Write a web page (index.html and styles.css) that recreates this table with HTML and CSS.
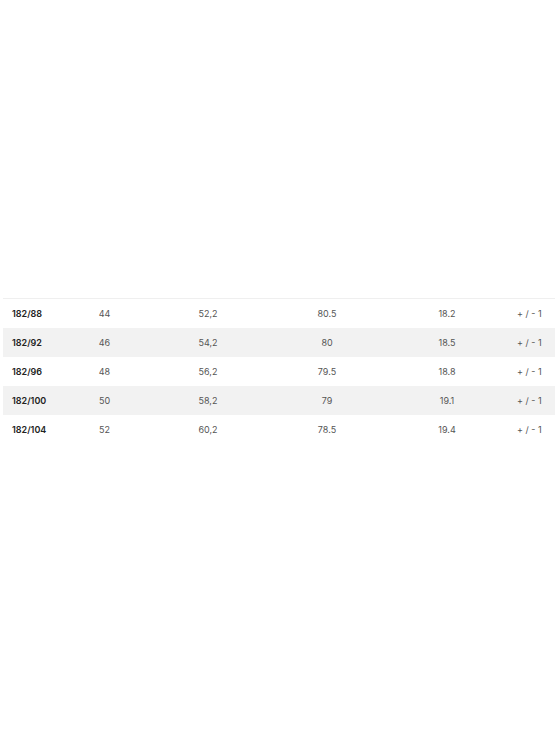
FILE: index.html
```html
<!DOCTYPE html>
<html>
<head>
<meta charset="utf-8">
<link rel="stylesheet" href="styles.css">
</head>
<body>
<div class="page">
  <div class="table">
    <div class="row">
      <div class="cell size">182/88</div><div class="cell">44</div><div class="cell">52,2</div><div class="cell">80.5</div><div class="cell">18.2</div><div class="cell tol">+ / - 1</div>
    </div>
    <div class="row alt">
      <div class="cell size">182/92</div><div class="cell">46</div><div class="cell">54,2</div><div class="cell">80</div><div class="cell">18.5</div><div class="cell tol">+ / - 1</div>
    </div>
    <div class="row">
      <div class="cell size">182/96</div><div class="cell">48</div><div class="cell">56,2</div><div class="cell">79.5</div><div class="cell">18.8</div><div class="cell tol">+ / - 1</div>
    </div>
    <div class="row alt">
      <div class="cell size">182/100</div><div class="cell">50</div><div class="cell">58,2</div><div class="cell">79</div><div class="cell">19.1</div><div class="cell tol">+ / - 1</div>
    </div>
    <div class="row">
      <div class="cell size">182/104</div><div class="cell">52</div><div class="cell">60,2</div><div class="cell">78.5</div><div class="cell">19.4</div><div class="cell tol">+ / - 1</div>
    </div>
  </div>
</div>
</body>
</html>
```

FILE: styles.css
```css
html, body {
  margin: 0;
  padding: 0;
  background: #ffffff;
}
.page {
  width: 560px;
  height: 746px;
  padding: 298px 5px 0 3px;
  box-sizing: border-box;
  font-family: "Inter", "Open Sans", sans-serif;
  font-size: 9px;
  color: #555555;
}
.table {
  border-top: 1px solid #efefef;
}
.row {
  display: grid;
  grid-template-columns: 67px 69px 138px 100px 140px 1fr;
  height: 29px;
  align-items: center;
}
.row.alt {
  background: #f2f2f2;
}
.cell {
  text-align: center;
  white-space: nowrap;
}
.cell.size {
  text-align: left;
  padding-left: 9px;
  font-weight: 600;
  color: #222222;
}
.cell.tol {
  text-align: right;
  padding-right: 15px;
}
```
